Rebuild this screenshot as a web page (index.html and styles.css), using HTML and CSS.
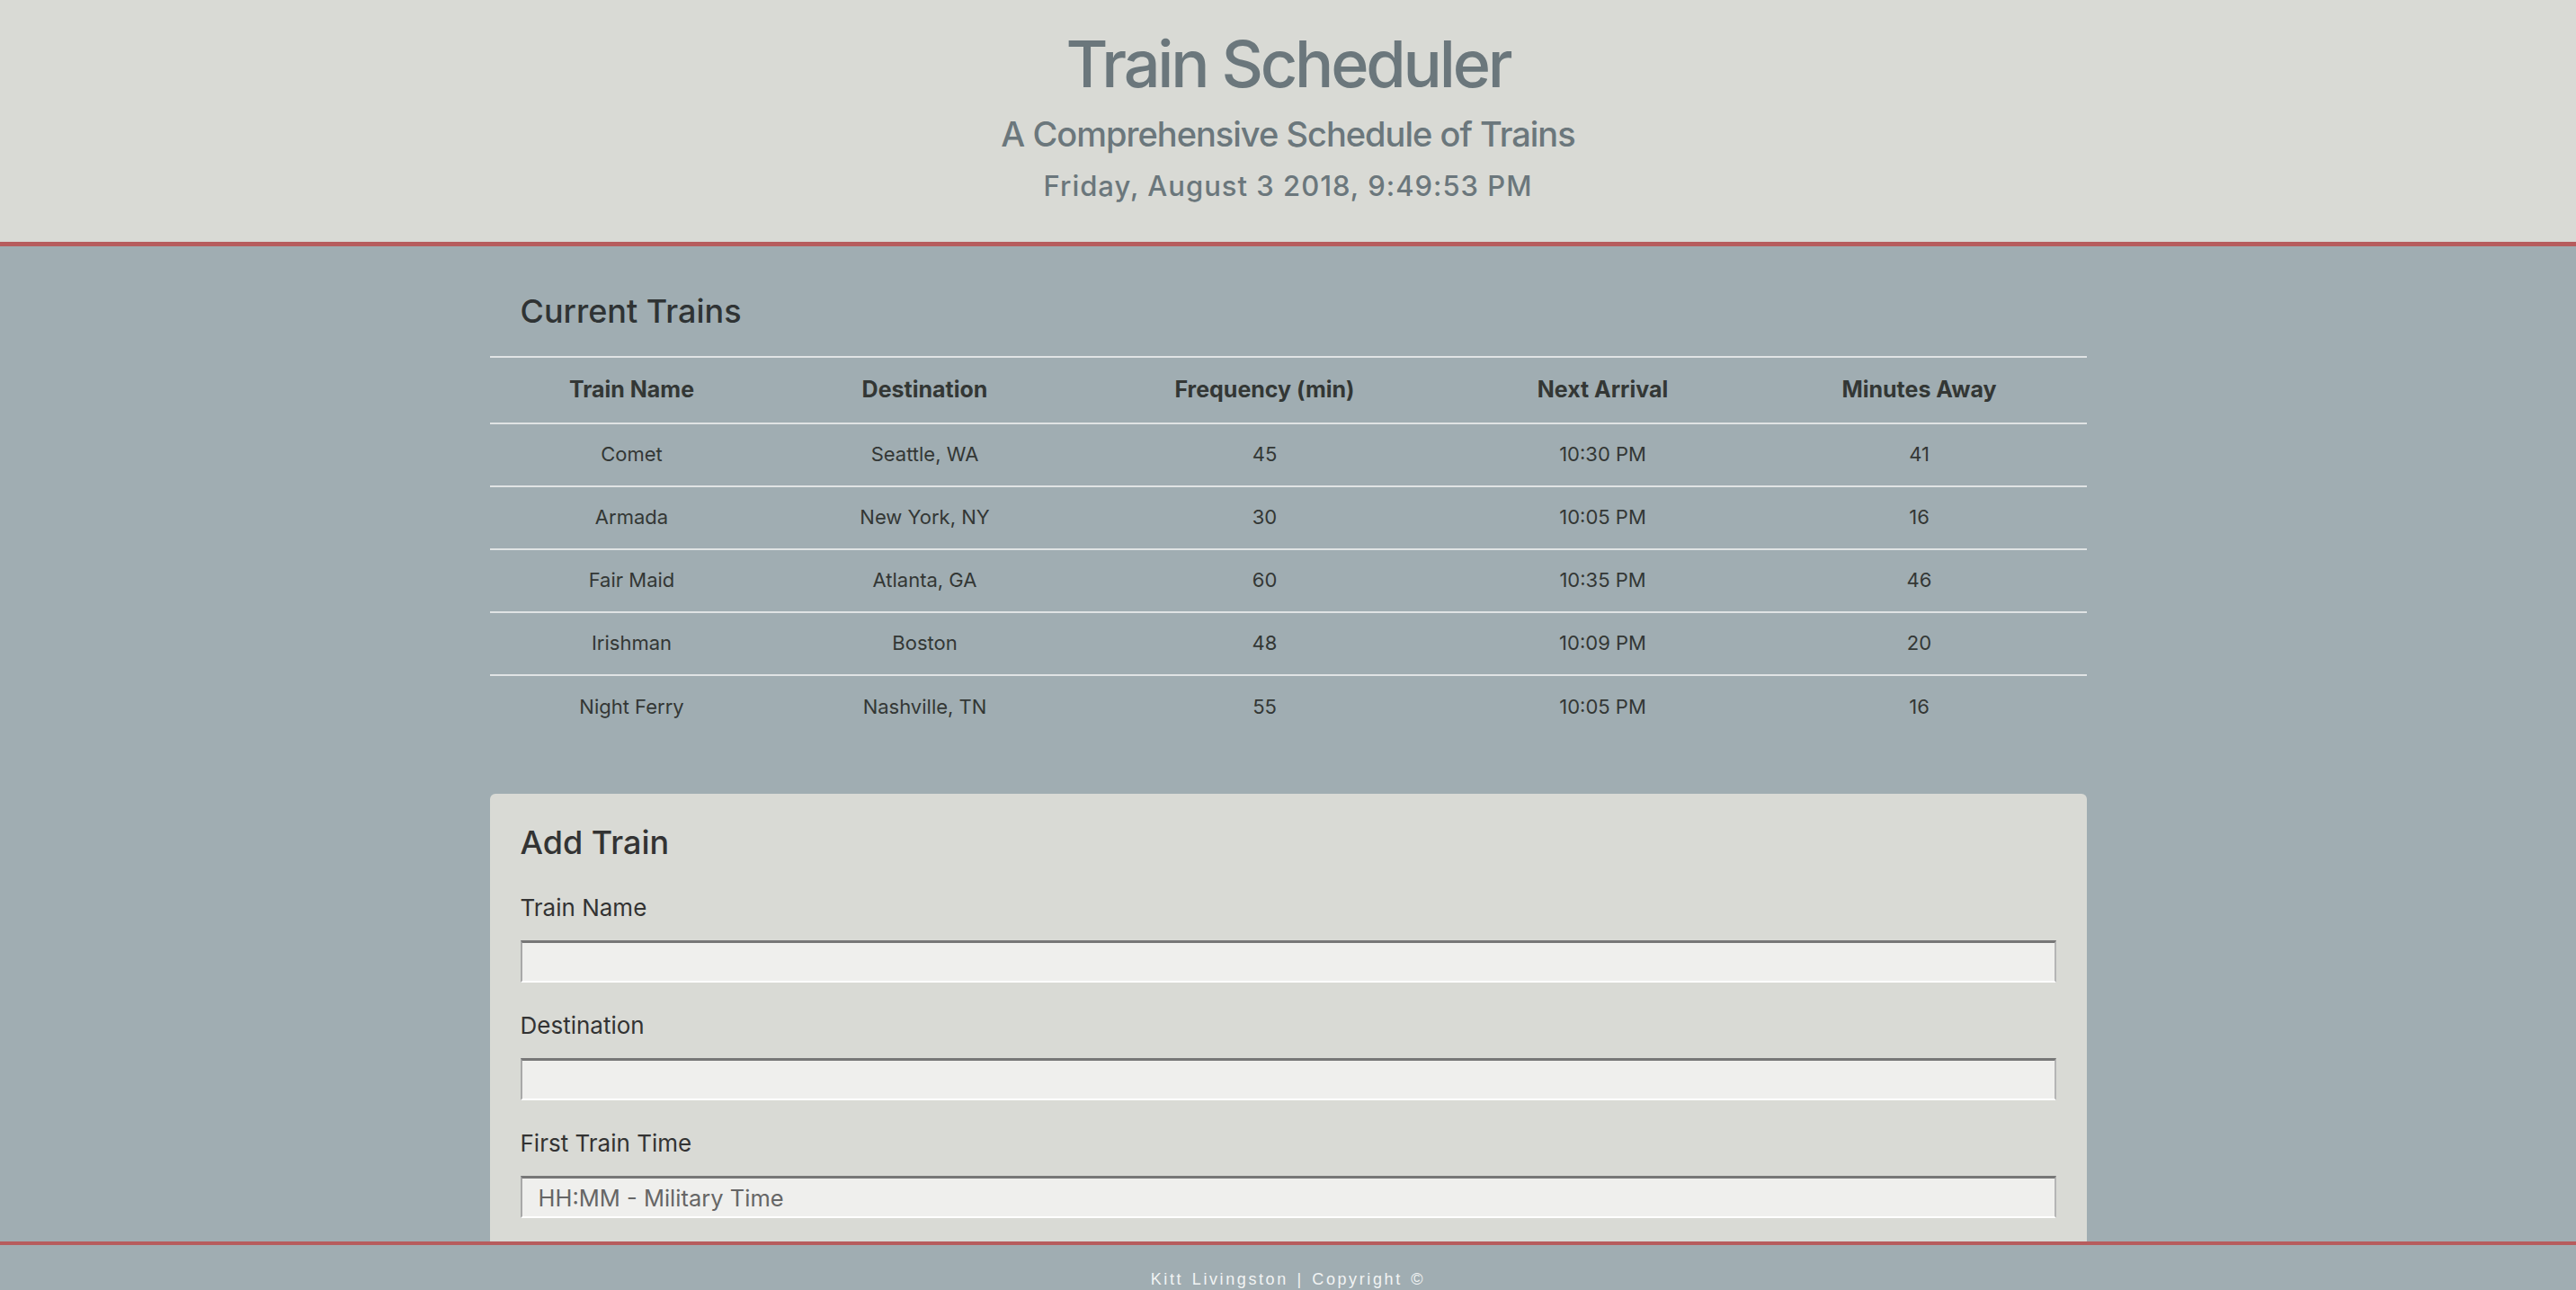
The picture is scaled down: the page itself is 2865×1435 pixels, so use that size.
FILE: index.html
```html
<!DOCTYPE html>
<html lang="en">
<head>
<meta charset="utf-8">
<title>Train Scheduler</title>
<link rel="stylesheet" href="styles.css">
</head>
<body>
<header class="site-header">
  <h1 class="title">Train Scheduler</h1>
  <h2 class="subtitle">A Comprehensive Schedule of Trains</h2>
  <div class="clock">Friday, August 3 2018, 9:49:53 PM</div>
</header>
<main class="main">
  <div class="container">
    <section class="trains">
      <h3 class="section-title">Current Trains</h3>
      <table class="schedule">
        <colgroup>
          <col class="c1"><col class="c2"><col class="c3"><col class="c4"><col class="c5">
        </colgroup>
        <thead>
          <tr><th>Train Name</th><th>Destination</th><th>Frequency (min)</th><th>Next Arrival</th><th>Minutes Away</th></tr>
        </thead>
        <tbody>
          <tr><td>Comet</td><td>Seattle, WA</td><td>45</td><td>10:30 PM</td><td>41</td></tr>
          <tr><td>Armada</td><td>New York, NY</td><td>30</td><td>10:05 PM</td><td>16</td></tr>
          <tr><td>Fair Maid</td><td>Atlanta, GA</td><td>60</td><td>10:35 PM</td><td>46</td></tr>
          <tr><td>Irishman</td><td>Boston</td><td>48</td><td>10:09 PM</td><td>20</td></tr>
          <tr><td>Night Ferry</td><td>Nashville, TN</td><td>55</td><td>10:05 PM</td><td>16</td></tr>
        </tbody>
      </table>
    </section>
    <section class="panel">
      <h3 class="panel-title">Add Train</h3>
      <form class="form">
        <div class="group">
          <label class="label" for="name">Train Name</label>
          <input class="field" id="name" type="text">
        </div>
        <div class="group">
          <label class="label" for="dest">Destination</label>
          <input class="field" id="dest" type="text">
        </div>
        <div class="group">
          <label class="label" for="first">First Train Time</label>
          <input class="field" id="first" type="text" placeholder="HH:MM - Military Time">
        </div>
        <div class="group">
          <label class="label" for="freq">Frequency (min)</label>
          <input class="field" id="freq" type="text">
        </div>
      </form>
    </section>
  </div>
</main>
<footer class="site-footer">
  <p class="footer-text">Kitt Livingston | Copyright &copy;</p>
</footer>
</body>
</html>
```
FILE: styles.css
```css
* { box-sizing: border-box; }
html, body { margin: 0; padding: 0; }
body {
  font-family: Inter, "Noto Sans", sans-serif;
  background: #a0adb2;
  color: #333735;
  min-height: 1435px;
}
.site-header {
  background: #d9dad5;
  border-bottom: 5px solid #b75c5d;
  text-align: center;
  color: #6b777c;
  padding: 27px 0 0;
  height: 274px;
}
.title {
  margin: 0;
  font-size: 72px;
  line-height: 88px;
  font-weight: 500;
  letter-spacing: -3.2px;
}
.subtitle {
  margin: 11px 0 0;
  font-size: 38px;
  line-height: 46px;
  font-weight: 500;
  letter-spacing: -1px;
}
.clock {
  margin-top: 16px;
  font-size: 31px;
  line-height: 37px;
  font-weight: 500;
  letter-spacing: 1px;
}
.container {
  width: 1776px;
  margin: 0 auto;
}
.trains { padding-top: 51px; }
.section-title {
  margin: 0 0 28px;
  padding-left: 34px;
  font-size: 36px;
  line-height: 43px;
  font-weight: 500;
  color: #2f3334;
}
.schedule {
  width: 100%;
  border-collapse: collapse;
  table-layout: fixed;
}
.c1 { width: 316px; }
.c2 { width: 336px; }
.c3 { width: 420px; }
.c4 { width: 332px; }
.c5 { width: 372px; }
.schedule th, .schedule td {
  text-align: center;
  vertical-align: middle;
  border-top: 2px solid #e0e3e4;
  padding: 0 0 2px;
}
.schedule th {
  height: 74px;
  font-size: 25px;
  font-weight: 700;
  border-bottom: 2px solid #e0e3e4;
}
.schedule td {
  height: 70px;
  font-size: 22px;
  font-weight: 400;
}
.schedule tbody tr:first-child td { border-top: 0; }
.panel {
  margin-top: 62px;
  background: #d9dad5;
  border-radius: 6px;
  padding: 33px 34px 40px;
}
.panel-title {
  margin: 0 0 35px;
  font-size: 36px;
  line-height: 43px;
  font-weight: 500;
  color: #333;
}
.group { margin-bottom: 32px; }
.label {
  display: block;
  font-size: 26px;
  line-height: 31px;
  margin-bottom: 21px;
  color: #333;
}
.field {
  display: block;
  width: 100%;
  height: 47px;
  background: #efefed;
  border-style: solid;
  border-width: 3px 2px 2px 2px;
  border-color: #777 #b5b5b5 #fff #a8a8a8;
  padding: 0 18px;
  font-family: Inter, "Noto Sans", sans-serif;
  font-size: 25.5px;
  color: #333;
}
.field::placeholder { color: #666; }
.site-footer {
  position: fixed;
  left: 0;
  right: 0;
  bottom: 0;
  height: 54px;
  background: #a0adb2;
  border-top: 4px solid #b75c5d;
  text-align: center;
}
.footer-text {
  margin: 0;
  padding-top: 29px;
  font-family: "Liberation Sans", Arial, sans-serif;
  font-size: 18px;
  line-height: 18px;
  letter-spacing: 2.6px;
  word-spacing: 2px;
  color: #f2f4f4;
}
```
